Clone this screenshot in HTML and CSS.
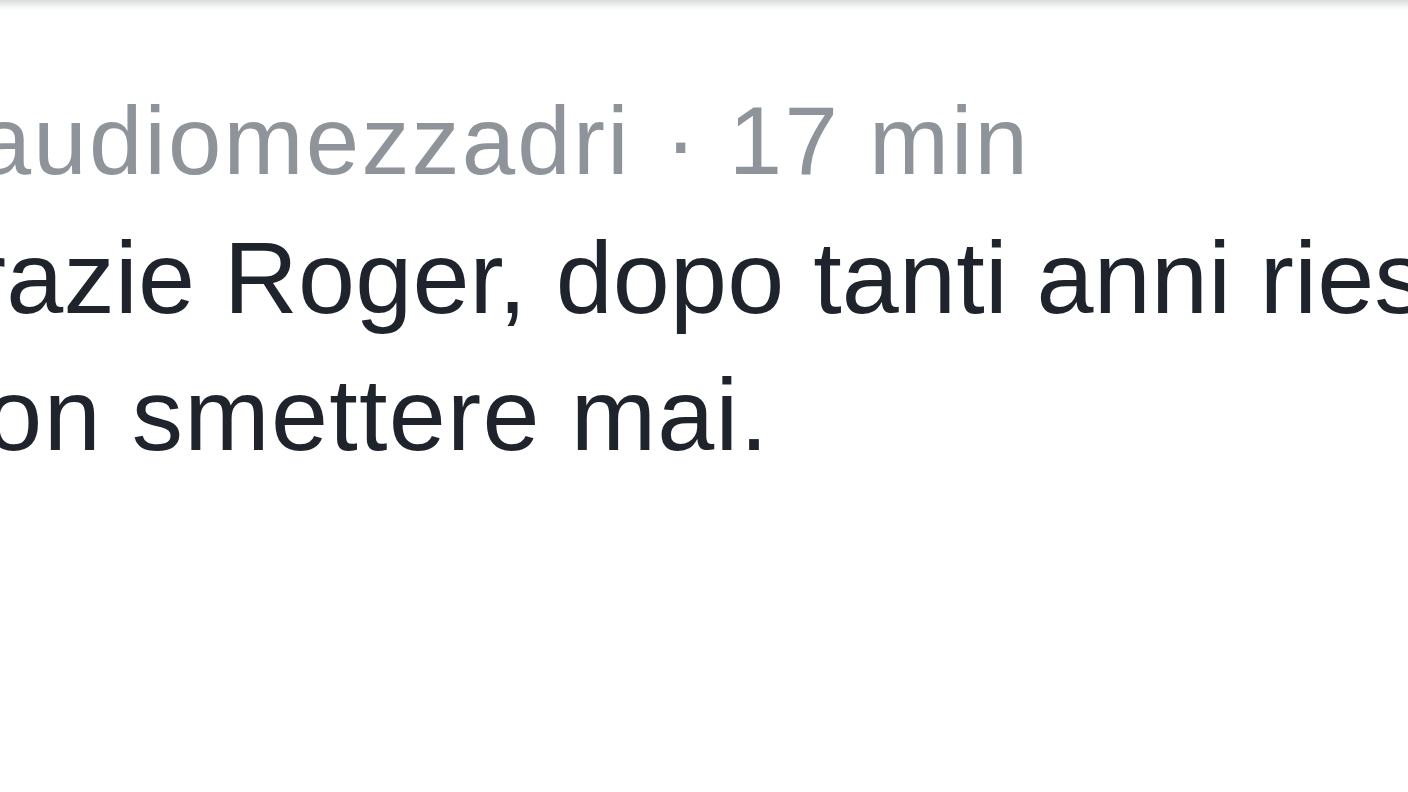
FILE: index.html
```html
<!DOCTYPE html>
<html lang="it">
<head>
<meta charset="utf-8">
<title>Commento</title>
<link rel="stylesheet" href="styles.css">
</head>
<body>
<div class="top-shade"></div>
<div class="comment">
  <div class="meta"><span class="author">claudiomezzadri</span><span class="dot">·</span><span class="time">17 min</span></div>
  <p class="text"><span class="line">Grazie Roger, dopo tanti anni riesci ancora ad emozionarci.</span><span class="line second">Non smettere mai.</span></p>
</div>
</body>
</html>
```
FILE: styles.css
```css
html, body {
  margin: 0;
  padding: 0;
  width: 1408px;
  height: 792px;
  overflow: hidden;
  background: #ffffff;
}
body {
  font-family: "Liberation Sans", Arial, sans-serif;
}
.top-shade {
  height: 10px;
  background: linear-gradient(#d9dadb, #f2f3f3 60%, #fdfdfd);
}
.comment {
  margin-left: -108px;
  padding-top: 76px;
  white-space: nowrap;
}
.meta {
  margin-left: 12px;
  font-size: 96px;
  line-height: 110px;
  letter-spacing: 2.2px;
  color: #8f949b;
}
.dot {
  margin: 0 30px 0 34px;
}
.text {
  margin: 13px 0 0;
  font-size: 102.5px;
  line-height: 137px;
  letter-spacing: 0.2px;
  color: #1f232b;
}
.line {
  display: block;
}
.second {
  margin-left: 18px;
  letter-spacing: 1.3px;
}
```
